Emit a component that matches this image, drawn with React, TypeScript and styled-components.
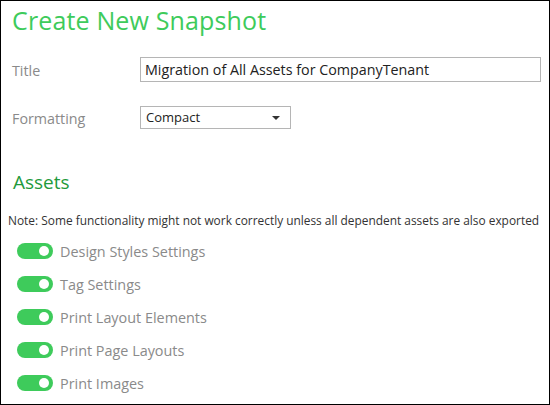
import React from "react";
import styled, { createGlobalStyle } from "styled-components";

const Global = createGlobalStyle`
  html, body { margin: 0; padding: 0; background: #fff; }
  * { box-sizing: border-box; }
`;

const Frame = styled.div`
  width: 550px;
  height: 405px;
  border: 1px solid #000;
  background: #fff;
  font-family: "Open Sans", "DejaVu Sans", sans-serif;
  padding: 0 0 0 11px;
  overflow: hidden;
`;

const Heading = styled.h1`
  margin: 3px 0 0 0;
  font-family: "Open Sans", sans-serif;
  font-weight: 400;
  font-size: 25px;
  line-height: 32px;
  letter-spacing: 0.15px;
  color: #3ecb5b;
`;

const FieldRow = styled.div<{ $mt: number }>`
  display: grid;
  grid-template-columns: 128px auto;
  align-items: center;
  margin-top: ${(p) => p.$mt}px;
`;

const Label = styled.label`
  font-size: 14.3px;
  color: #8a8a8a;
  padding-top: 2px;
`;

const TextInput = styled.div`
  width: 401px;
  height: 25px;
  border: 1px solid #b5b5b5;
  padding: 0 4px;
  font-size: 14.3px;
  line-height: 23px;
  color: #222;
`;

const Select = styled.div`
  width: 151px;
  height: 23px;
  border: 1px solid #b5b5b5;
  padding: 0 5px;
  font-size: 13px;
  line-height: 21px;
  color: #222;
  display: flex;
  align-items: center;
  justify-content: space-between;
`;

const Caret = styled.span`
  width: 0;
  height: 0;
  border-left: 4px solid transparent;
  border-right: 4px solid transparent;
  border-top: 4px solid #333;
  margin-right: 5px;
`;

const SubHeading = styled.h2`
  margin: 40px 0 0 1px;
  font-weight: 400;
  font-size: 19px;
  line-height: 26px;
  color: #1f9a3c;
`;

const Note = styled.p`
  margin: 17px 0 0 -4px;
  font-size: 11.9px;
  line-height: 16px;
  color: #333;
  white-space: nowrap;
`;

const ToggleList = styled.div`
  display: flex;
  flex-direction: column;
  gap: 13px;
  margin-top: 13px;
  padding-left: 5px;
`;

const ToggleRow = styled.div`
  display: flex;
  align-items: center;
  gap: 7px;
  height: 20px;
`;

const Switch = styled.span<{ $on: boolean }>`
  position: relative;
  width: 36px;
  height: 16px;
  border-radius: 8px;
  background: ${(p) => (p.$on ? "#3ecb5b" : "#ccc")};
  flex-shrink: 0;
  &::after {
    content: "";
    position: absolute;
    top: 3px;
    left: ${(p) => (p.$on ? "22px" : "3px")};
    width: 10px;
    height: 10px;
    border-radius: 50%;
    background: #fff;
  }
`;

const ToggleLabel = styled.span`
  font-size: 14.4px;
  color: #8a8a8a;
`;

const assets = [
  "Design Styles Settings",
  "Tag Settings",
  "Print Layout Elements",
  "Print Page Layouts",
  "Print Images",
];

export default function App() {
  return (
    <>
      <Global />
      <Frame>
        <Heading>Create New Snapshot</Heading>
        <FieldRow $mt={21}>
          <Label>Title</Label>
          <TextInput>Migration of All Assets for CompanyTenant</TextInput>
        </FieldRow>
        <FieldRow $mt={24}>
          <Label>Formatting</Label>
          <Select>
            <span>Compact</span>
            <Caret />
          </Select>
        </FieldRow>
        <SubHeading>Assets</SubHeading>
        <Note>
          Note: Some functionality might not work correctly unless all dependent assets are also exported
        </Note>
        <ToggleList>
          {assets.map((a) => (
            <ToggleRow key={a}>
              <Switch $on />
              <ToggleLabel>{a}</ToggleLabel>
            </ToggleRow>
          ))}
        </ToggleList>
      </Frame>
    </>
  );
}
